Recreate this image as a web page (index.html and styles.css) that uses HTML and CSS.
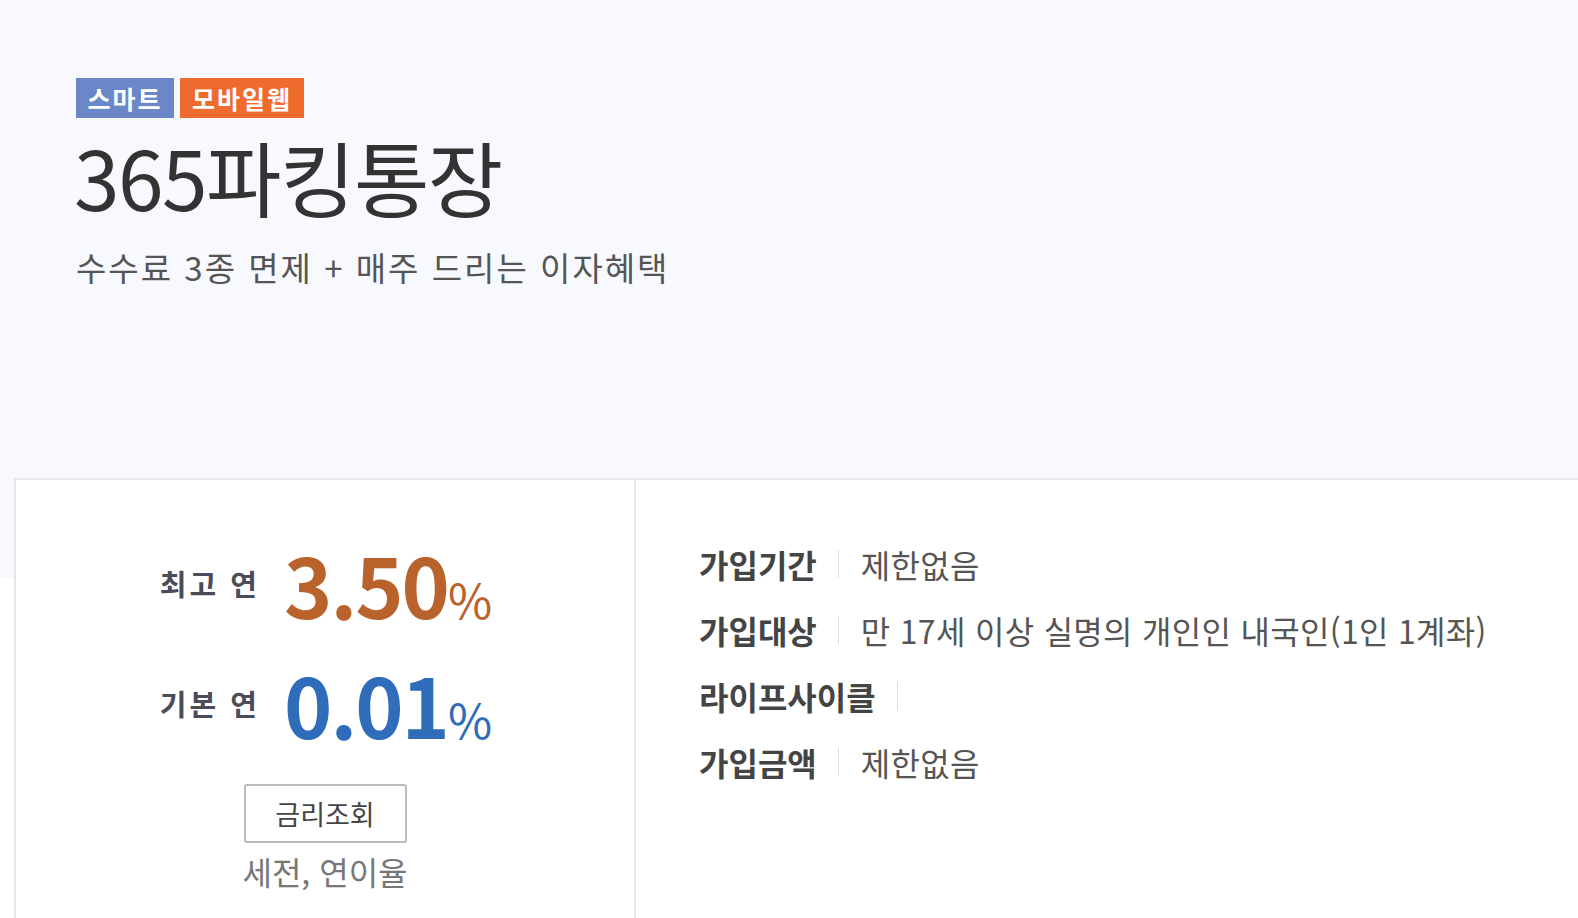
FILE: index.html
```html
<!DOCTYPE html>
<html lang="ko">
<head>
<meta charset="utf-8">
<title>365파킹통장</title>
<link rel="stylesheet" href="styles.css">
</head>
<body>
<div class="page">
  <section class="hero">
    <div class="badges">
      <span class="badge badge-smart">스마트</span>
      <span class="badge badge-mobile">모바일웹</span>
    </div>
    <h1 class="title">365파킹통장</h1>
    <p class="subtitle">수수료 3종 면제 + 매주 드리는 이자혜택</p>
  </section>
  <section class="box">
    <div class="rates">
      <div class="rate-row">
        <span class="rate-label">최고 연</span>
        <span class="rate-value rate-max">3.50<span class="pct">%</span></span>
      </div>
      <div class="rate-row">
        <span class="rate-label">기본 연</span>
        <span class="rate-value rate-base">0.01<span class="pct">%</span></span>
      </div>
      <button class="rate-btn" type="button">금리조회</button>
      <p class="rate-note">세전, 연이율</p>
    </div>
    <div class="info">
      <dl class="info-list">
        <div class="info-row"><dt>가입기간</dt><dd>제한없음</dd></div>
        <div class="info-row"><dt>가입대상</dt><dd>만 17세 이상 실명의 개인인 내국인(1인 1계좌)</dd></div>
        <div class="info-row"><dt>라이프사이클</dt><dd></dd></div>
        <div class="info-row"><dt>가입금액</dt><dd>제한없음</dd></div>
      </dl>
    </div>
  </section>
</div>
</body>
</html>
```

FILE: styles.css
```css
html, body {
  margin: 0;
  padding: 0;
  background: #ffffff;
  overflow: hidden;
}
body {
  font-family: "Noto Sans CJK KR", "Noto Sans", sans-serif;
  color: #333;
}
.page {
  width: 1578px;
  height: 918px;
  overflow: hidden;
}
.hero {
  background: #f8f9fe;
  height: 578px;
  padding: 78px 0 0 76px;
  box-sizing: border-box;
}
.badges {
  display: flex;
  gap: 6px;
}
.badge {
  display: inline-flex;
  align-items: center;
  justify-content: center;
  height: 40px;
  color: #fff;
  font-weight: 700;
  font-size: 25px;
  letter-spacing: 2px;
  line-height: 1;
  box-sizing: border-box;
}
.badge-smart { background: #6a88c8; width: 98px; }
.badge-mobile { background: #ee6b2d; width: 124px; }
.title {
  margin: 8px 0 0 -2px;
  font-size: 82px;
  font-weight: 400;
  line-height: 100px;
  letter-spacing: -1.5px;
  color: #333;
}
.subtitle {
  margin: 21px 0 0 0;
  font-size: 33px;
  line-height: 40px;
  letter-spacing: 2px;
  color: #555;
}
.box {
  margin: -100px 0 0 14px;
  height: 460px;
  width: 1700px;
  border-top: 2px solid #e6e6e6;
  border-left: 2px solid #e6e6e6;
  background: #fff;
  display: flex;
}
.rates {
  width: 620px;
  border-right: 2px solid #e6e6e6;
  display: flex;
  flex-direction: column;
  align-items: center;
  padding-top: 44px;
  box-sizing: border-box;
}
.rate-row {
  display: flex;
  align-items: center;
  height: 120px;
  margin-left: 2px;
}
.rate-label {
  font-size: 29px;
  font-weight: 700;
  color: #4a4c58;
  letter-spacing: 3px;
  margin-right: 24px;
  margin-top: -2px;
}
.rate-value {
  font-size: 82px;
  font-weight: 700;
  line-height: 1;
  letter-spacing: -2px;
}
.rate-max { color: #b9622b; }
.rate-base { color: #2f6dba; }
.pct {
  font-size: 48px;
  font-weight: 400;
  letter-spacing: 0;
  margin-left: 0;
}
.rate-btn {
  margin-top: 20px;
  width: 163px;
  height: 59px;
  border: 2px solid #bbb;
  border-radius: 3px;
  background: #fff;
  font-family: inherit;
  font-size: 27px;
  color: #444;
  padding: 0;
}
.rate-note {
  margin: 8px 0 0;
  font-size: 32px;
  color: #777;
  line-height: 40px;
}
.info {
  padding: 51px 0 0 63px;
}
.info-list {
  margin: 0;
}
.info-row {
  display: flex;
  align-items: center;
  height: 66px;
}
.info-row dt {
  font-size: 32px;
  font-weight: 700;
  color: #444;
  padding-right: 21px;
  border-right: 1px solid #ddd;
  line-height: 28px;
}
.info-row dd {
  margin: 0;
  padding-left: 22px;
  font-size: 32px;
  letter-spacing: 0.3px;
  color: #555;
}
```
